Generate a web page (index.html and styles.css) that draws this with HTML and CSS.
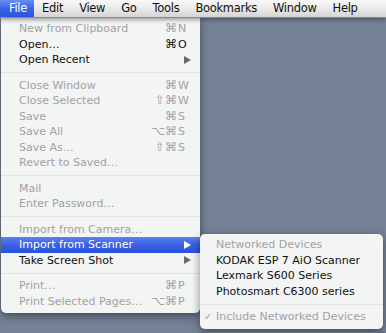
FILE: index.html
```html
<!DOCTYPE html>
<html lang="en">
<head>
    <meta charset="UTF-8">
    <title>File menu</title>
    <link rel="stylesheet" href="styles.css">
</head>
<body>
    <div class="menubar">
        <span class="bar-item active">File</span>
        <span class="bar-item">Edit</span>
        <span class="bar-item">View</span>
        <span class="bar-item">Go</span>
        <span class="bar-item">Tools</span>
        <span class="bar-item">Bookmarks</span>
        <span class="bar-item">Window</span>
        <span class="bar-item">Help</span>
    </div>

    <div class="desktop">
        <ul class="menu file-menu">
            <li class="item disabled"><span class="label">New from Clipboard</span><span class="mods">⌘</span><span class="key">N</span></li>
            <li class="item"><span class="label">Open…</span><span class="mods">⌘</span><span class="key">O</span></li>
            <li class="item"><span class="label">Open Recent</span><span class="arrow"></span></li>
            <li class="sep"></li>
            <li class="item disabled"><span class="label">Close Window</span><span class="mods">⌘</span><span class="key">W</span></li>
            <li class="item disabled"><span class="label">Close Selected</span><span class="mods">⇧⌘</span><span class="key">W</span></li>
            <li class="item disabled"><span class="label">Save</span><span class="mods">⌘</span><span class="key">S</span></li>
            <li class="item disabled"><span class="label">Save All</span><span class="mods">⌥⌘</span><span class="key">S</span></li>
            <li class="item disabled"><span class="label">Save As…</span><span class="mods">⇧⌘</span><span class="key">S</span></li>
            <li class="item disabled"><span class="label">Revert to Saved…</span></li>
            <li class="sep"></li>
            <li class="item disabled"><span class="label">Mail</span></li>
            <li class="item disabled"><span class="label">Enter Password…</span></li>
            <li class="sep"></li>
            <li class="item disabled"><span class="label">Import from Camera…</span></li>
            <li class="item selected"><span class="label">Import from Scanner</span><span class="arrow"></span></li>
            <li class="item"><span class="label">Take Screen Shot</span><span class="arrow"></span></li>
            <li class="sep"></li>
            <li class="item disabled"><span class="label">Print…</span><span class="mods">⌘</span><span class="key">P</span></li>
            <li class="item disabled"><span class="label">Print Selected Pages…</span><span class="mods">⌥⌘</span><span class="key">P</span></li>
        </ul>

        <ul class="menu sub-menu">
            <li class="item disabled"><span class="label">Networked Devices</span></li>
            <li class="item"><span class="label">KODAK ESP 7 AiO Scanner</span></li>
            <li class="item"><span class="label">Lexmark S600 Series</span></li>
            <li class="item"><span class="label">Photosmart C6300 series</span></li>
            <li class="sep"></li>
            <li class="item disabled"><span class="check">✓</span><span class="label">Include Networked Devices</span></li>
        </ul>
    </div>
</body>
</html>
```

FILE: styles.css
```css
/* Base */
body {
    margin: 0;
    font-family: "DejaVu Sans", "Liberation Sans", sans-serif;
    background-color: #758296;
    height: 333px;
    overflow: hidden;
}

/* Menu bar */
.menubar {
    display: flex;
    height: 17px;
    background: linear-gradient(#f9f9f9, #e6e6e6 60%, #d4d4d4);
    border-bottom: 1px solid #8a8a8a;
    box-shadow: 0 2px 4px rgba(0, 0, 0, 0.35);
    position: relative;
    z-index: 2;
}

.bar-item {
    font-size: 11.5px;
    line-height: 17px;
    color: #111;
    padding: 0 8px;
    letter-spacing: -0.3px;
}

.bar-item:first-child {
    padding: 0 7px 0 9px;
}

.bar-item.active {
    color: #fff;
    background: linear-gradient(#6a8cf5, #3a62e6 50%, #2c55e0);
}

/* Desktop area */
.desktop {
    position: relative;
}

/* Menus */
.menu {
    list-style: none;
    margin: 0;
    background-color: rgba(246, 246, 246, 0.98);
    box-shadow: 0 3px 10px rgba(0, 0, 0, 0.45);
    font-size: 11px;
    position: absolute;
}

.file-menu {
    left: 1px;
    top: 0;
    width: 199px;
    padding: 3px 0 4px;
    border-radius: 0 0 5px 5px;
    z-index: 1;
}

.sub-menu {
    left: 200px;
    top: 216px;
    width: 183px;
    padding: 3px 0 4px;
    border-radius: 5px;
    z-index: 3;
}

.item {
    display: flex;
    align-items: center;
    height: 15.5px;
    line-height: 15.5px;
    padding-left: 18px;
    color: #111;
    white-space: nowrap;
}

.sub-menu .item {
    padding-left: 16px;
    position: relative;
}

.item.disabled {
    color: #a2a2a2;
}

.item.selected {
    color: #fff;
    background: linear-gradient(#5f80f3, #3a60e5 50%, #2a52dc);
}

.label {
    flex: 1;
}

/* Shortcut columns */
.mods {
    width: 30px;
    text-align: right;
    font-size: 12px;
}

.key {
    width: 14px;
    padding-left: 1px;
    margin-right: 8px;
}

.arrow {
    width: 0;
    height: 0;
    border-top: 4px solid transparent;
    border-bottom: 4px solid transparent;
    border-left: 7px solid #6a6a6a;
    margin-right: 9px;
}

.item.selected .arrow {
    border-left-color: #fff;
}

.check {
    position: absolute;
    left: 4px;
    font-size: 10px;
}

.sep {
    height: 1px;
    margin: 4.5px 0;
    background-color: #e2e2e2;
}
```
